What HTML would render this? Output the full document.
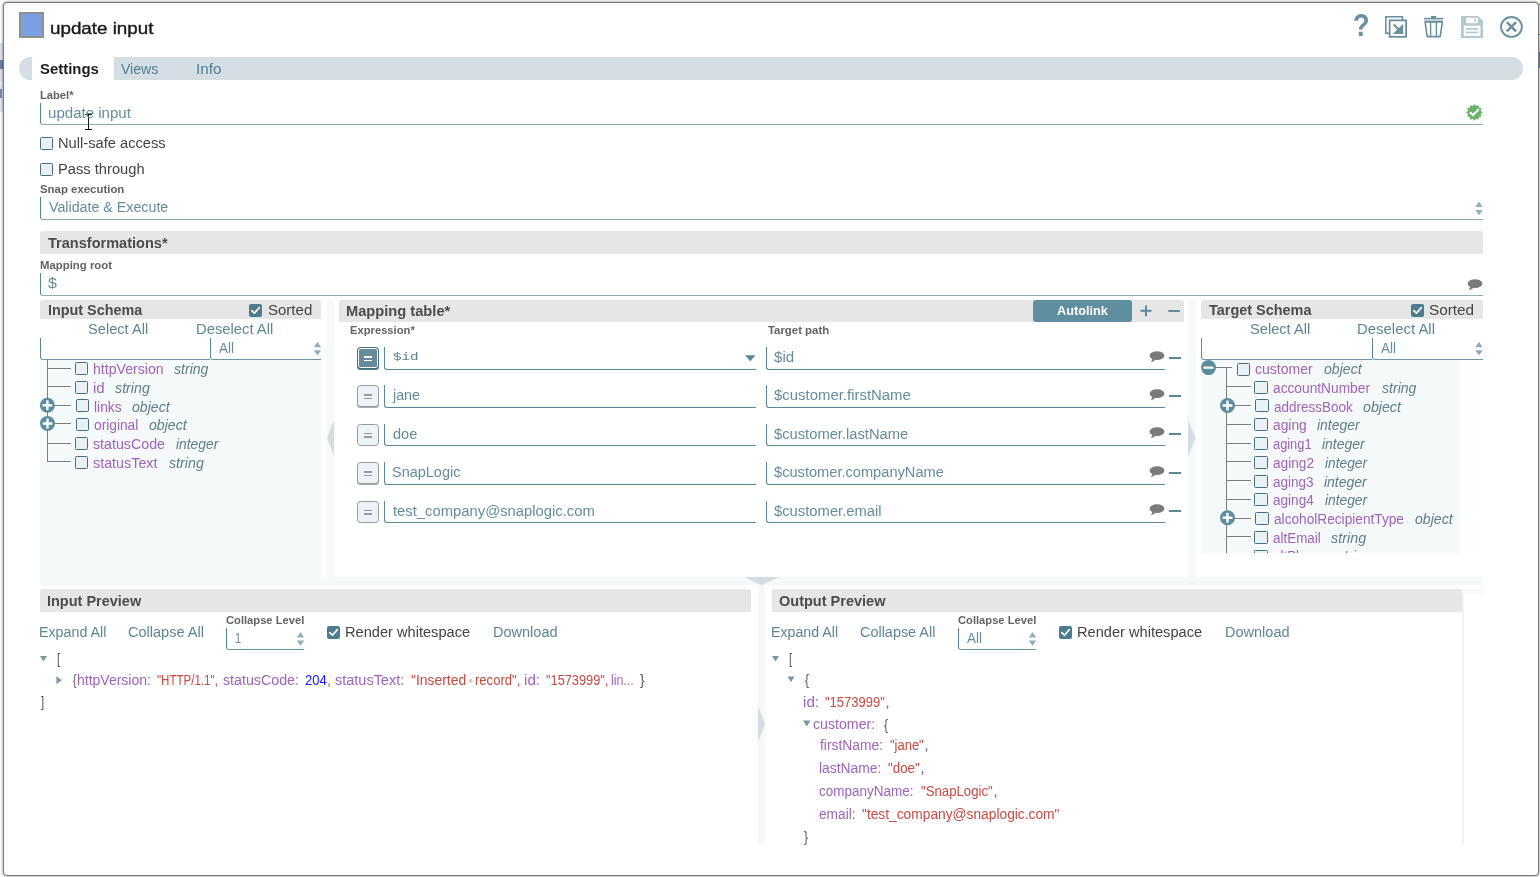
<!DOCTYPE html>
<html><head><meta charset="utf-8"><title>update input</title>
<style>
html,body{margin:0;padding:0;background:#fff;}
#root{position:relative;width:1540px;height:877px;overflow:hidden;background:#fff;font-family:"Liberation Sans",sans-serif;}
#root div,#root svg,#root span{position:absolute;box-sizing:border-box;}
.t{white-space:pre;line-height:normal;transform-origin:0 0;}

.dlg{left:3px;top:2px;width:1536px;height:874px;border:1px solid #7a7a7a;border-radius:4px;box-shadow:0 0 3px rgba(0,0,0,.55);background:#fff;}
.hdr{background:#e6e6e6;border-radius:3px 3px 0 0;}
.inp{border-left:1px solid #5a8798;border-bottom:1px solid #6e97a6;border-radius:0 0 0 3px;background:#fff;}
.inpl{border-left:1px solid #5a8798;border-bottom:1px solid #8dabb7;border-radius:0 0 0 3px;background:#fff;}
.inpd{border-left:1px solid #5a8798;border-bottom:1px solid #5a8798;border-radius:0 0 0 3px;background:#fff;}
.cb{width:13px;height:13px;border:1px solid #486e7d;background:#e9f1f4;border-radius:1.5px;}
.cbon{width:13px;height:13px;background:#4d7c8e;border-radius:2px;}
.pan{background:#f5f9fa;}
.ln{background:#7d7d7d;}
.eq{width:22px;height:22px;border:1px solid #9a9a9a;background:#ecf3f6;border-radius:3.5px;}
.eq i,.eqon i{position:absolute;left:6px;width:8px;height:1.5px;background:#999;}
.eqon{width:22px;height:22px;border:1px solid #46707f;background:#668b9b;border-radius:3.5px;box-shadow:0 0 0 1px #fff inset,0 1px 0 #55798a;}
.eqon i{background:#fff;}
.mn{height:2px;background:#5a8798;}

</style></head><body>
<div id="root">
<div style="left:0;top:43px;width:4px;height:38px;background:#dde2ec"></div>
<div style="left:0;top:81px;width:4px;height:4px;background:#eceff4"></div>
<div style="left:0;top:85px;width:4px;height:27px;background:#e1e5ee"></div>
<div style="left:0;top:60px;width:3px;height:9px;background:#6f7fae"></div>
<div style="left:0;top:89px;width:2px;height:9px;background:#7d8cb8"></div>
<div style="left:1539px;top:4px;width:1px;height:1px;background:#4a66a0"></div>
<div style="left:1539px;top:34px;width:1px;height:1px;background:#4a66a0"></div>
<div style="left:1539px;top:40px;width:1px;height:12px;background:#e8ebf2"></div>
<div style="left:1539px;top:52px;width:1px;height:16px;background:#6d88bb"></div>
<div class="dlg"></div>
<div style="left:19px;top:12px;width:25px;height:26px;border:2px solid #8f8f8f;background:#7b9fe3"></div>
<svg style="left:1385px;top:16px" width="23" height="23" viewBox="0 0 23 23">
<rect x="0.8" y="0.75" width="16.6" height="16.4" fill="#fff" stroke="#6a909f" stroke-width="1.6"/>
<rect x="4.65" y="4.35" width="16.45" height="16.45" fill="#fff" stroke="#6a909f" stroke-width="1.8"/>
<path d="M18.2 7.7 L18.2 17.95 L7.9 17.95 Z" fill="#6a909f"/>
<path d="M8.7 8.6 L14 13.9" stroke="#6a909f" stroke-width="2.1" fill="none"/>
</svg>
<svg style="left:1423px;top:15px" width="22" height="24" viewBox="0 0 22 24">
<rect x="8.06" y="0.95" width="4.9" height="2.1" fill="#6a909f"/>
<rect x="1.05" y="2.8" width="19.4" height="1.4" fill="#6a909f"/>
<rect x="1.3" y="4.2" width="18.9" height="2.1" fill="#b9cbd2"/>
<path d="M2.1 6.9 L19.4 6.9 L17.2 21.6 L4.2 21.6 Z" fill="none" stroke="#6a909f" stroke-width="1.6" stroke-linejoin="round"/>
<path d="M7.6 7 L7.6 21.6 M13.4 7 L13.4 21.6" fill="none" stroke="#6a909f" stroke-width="1.4"/>
</svg>
<svg style="left:1461px;top:16px" width="23" height="23" viewBox="0 0 23 23">
<path d="M0 0 L17 0 L22 5 L22 22 L0 22 Z" fill="#b5c8d0"/>
<rect x="5.2" y="1.8" width="11.6" height="5.4" fill="#fff"/>
<rect x="13.3" y="2.8" width="1.7" height="3.2" fill="#b5c8d0"/>
<rect x="2.8" y="9.7" width="16.6" height="10.2" fill="#fff"/>
<rect x="4.6" y="12" width="12.6" height="1.7" fill="#b5c8d0"/>
<rect x="4.6" y="15.6" width="12.6" height="1.6" fill="#b5c8d0"/>
</svg>
<svg style="left:1499px;top:14px" width="26" height="26" viewBox="0 0 26 26">
<ellipse cx="12.45" cy="12.95" rx="10.4" ry="9.9" fill="none" stroke="#6a909f" stroke-width="1.9"/>
<path d="M7.85 8.2 L17.05 17.4 M17.05 8.2 L7.85 17.4" stroke="#6a909f" stroke-width="2.5" fill="none"/>
</svg>
<div style="left:19px;top:57px;width:1504px;height:23px;border-radius:11.5px;background:#d5dee2"></div>
<div style="left:32px;top:57px;width:82px;height:23px;background:#fff"></div>
<div class="inpl" style="left:40px;top:103px;width:1443px;height:22px"></div>
<svg style="left:1466.1px;top:103.6px" width="17" height="17" viewBox="0 0 17 17">
<polygon points="8.40,0.00 10.08,2.12 12.60,1.13 13.00,3.80 15.67,4.20 14.68,6.72 16.80,8.40 14.68,10.08 15.67,12.60 13.00,13.00 12.60,15.67 10.08,14.68 8.40,16.80 6.72,14.68 4.20,15.67 3.80,13.00 1.13,12.60 2.12,10.08 0.00,8.40 2.12,6.72 1.13,4.20 3.80,3.80 4.20,1.13 6.72,2.12" fill="#6ab36a"/>
<path d="M4 8.2 L6.9 11 L12.9 5.2" fill="none" stroke="#fff" stroke-width="2.2"/></svg>
<div style="left:88px;top:114.5px;width:1px;height:15px;background:#111"></div>
<div style="left:85px;top:114px;width:7px;height:1px;background:#111"></div>
<div style="left:85px;top:129px;width:7px;height:1px;background:#111"></div>
<div class="cb" style="left:40px;top:137px"></div>
<div class="cb" style="left:40px;top:163px"></div>
<div class="inpl" style="left:40px;top:197px;width:1443px;height:23px"></div>
<svg style="left:0;top:0" width="1540" height="877"><path d="M1475.3 206.9 L1479 201.5 L1482.7 206.9 Z M1475.3 209.9 L1479 215.3 L1482.7 209.9 Z" fill="#92adb8"/></svg>
<div style="left:40px;top:231px;width:1443px;height:22.5px;background:#e6e6e6;border-radius:3px 3px 0 0"></div>
<div class="inpl" style="left:40px;top:273px;width:1443px;height:22.5px"></div>
<svg style="left:1466.5px;top:279px" width="16" height="12" viewBox="0 0 16 12"><ellipse cx="8" cy="4.6" rx="7.4" ry="4.4" fill="#7a7a7a"/><path d="M3.2 7.2 C3.4 9 2.6 10.2 1.6 11 C3.8 10.8 5.6 9.8 6.6 8.4 Z" fill="#7a7a7a"/></svg>
<div class="hdr" style="left:40px;top:300px;width:281px;height:19px"></div>
<div class="pan" style="left:40px;top:359px;width:281px;height:218px"></div>
<div class="cbon" style="left:249px;top:304px"></div><svg style="left:249px;top:304px" width="13" height="13" viewBox="0 0 13 13"><path d="M2.8 6.6 L5.4 9.2 L10.3 3.6" fill="none" stroke="#fff" stroke-width="1.7" stroke-linecap="round" stroke-linejoin="round"/></svg>
<div class="inp" style="left:40px;top:338px;width:170px;height:21.5px"></div>
<div class="inp" style="left:210px;top:338px;width:111px;height:21.5px"></div>
<svg style="left:0;top:0" width="1540" height="877"><path d="M313.8 347.2 L317.5 341.8 L321.2 347.2 Z M313.8 350.2 L317.5 355.59999999999997 L321.2 350.2 Z" fill="#92adb8"/></svg>
<div class="ln" style="left:47px;top:359.5px;width:1px;height:102.5px"></div>
<div class="ln" style="left:47px;top:368px;width:24px;height:1px"></div>
<div class="ln" style="left:47px;top:386px;width:24px;height:1px"></div>
<div class="ln" style="left:47px;top:405px;width:24px;height:1px"></div>
<div class="ln" style="left:47px;top:423px;width:24px;height:1px"></div>
<div class="ln" style="left:47px;top:443px;width:24px;height:1px"></div>
<div class="ln" style="left:47px;top:461px;width:24px;height:1px"></div>
<div class="cb" style="left:75px;top:362px"></div>
<div class="cb" style="left:75px;top:381px"></div>
<div class="cb" style="left:76px;top:399px"></div>
<div class="cb" style="left:76px;top:418px"></div>
<div class="cb" style="left:75px;top:437px"></div>
<div class="cb" style="left:75px;top:456px"></div>
<svg style="left:0;top:0" width="1540" height="877"><circle cx="47.4" cy="405.2" r="7.5" fill="#5b8d9e"/><rect x="42.4" y="404.0" width="10" height="2.4" rx="0.6" fill="#fff"/><rect x="46.199999999999996" y="400.2" width="2.4" height="10" rx="0.6" fill="#fff"/></svg>
<svg style="left:0;top:0" width="1540" height="877"><circle cx="47.5" cy="423.5" r="7.5" fill="#5b8d9e"/><rect x="42.5" y="422.3" width="10" height="2.4" rx="0.6" fill="#fff"/><rect x="46.3" y="418.5" width="2.4" height="10" rx="0.6" fill="#fff"/></svg>
<div class="pan" style="left:327px;top:300px;width:7px;height:277px"></div>
<div class="pan" style="left:1188px;top:300px;width:7.5px;height:277px"></div>
<div class="pan" style="left:40px;top:577px;width:1443px;height:8px"></div>
<div class="hdr" style="left:339px;top:300px;width:845px;height:21.5px"></div>
<div style="left:1033px;top:300px;width:99px;height:21.5px;background:#5f8f9f;border-radius:3px"></div>
<svg style="left:0;top:0" width="1540" height="877">
<path d="M1146 305.5 L1146 316.3 M1140.5 310.8 L1151.5 310.8" stroke="#5a8798" stroke-width="1.9" fill="none"/>
<path d="M1168.3 311 L1179.8 311" stroke="#5a8798" stroke-width="1.9" fill="none"/>
</svg>
<div class="eqon" style="left:357px;top:347px"><i style="top:8px"></i><i style="top:11.5px"></i></div>
<div class="inpd" style="left:384px;top:347px;width:372px;height:22.5px"></div>
<div class="inpd" style="left:766px;top:347px;width:399px;height:22.5px"></div>
<svg style="left:1148.8px;top:350.7px" width="16" height="12" viewBox="0 0 16 12"><ellipse cx="8" cy="4.6" rx="7.4" ry="4.4" fill="#7a7a7a"/><path d="M3.2 7.2 C3.4 9 2.6 10.2 1.6 11 C3.8 10.8 5.6 9.8 6.6 8.4 Z" fill="#7a7a7a"/></svg>
<div class="mn" style="left:1168.5px;top:356.5px;width:12px"></div>
<div class="eq" style="left:357px;top:385px;box-shadow:0 1px 0 #aaa;"><i style="top:8px"></i><i style="top:11.5px"></i></div>
<div class="inpd" style="left:384px;top:385px;width:372px;height:22.5px"></div>
<div class="inpd" style="left:766px;top:385px;width:399px;height:22.5px"></div>
<svg style="left:1148.8px;top:388.7px" width="16" height="12" viewBox="0 0 16 12"><ellipse cx="8" cy="4.6" rx="7.4" ry="4.4" fill="#7a7a7a"/><path d="M3.2 7.2 C3.4 9 2.6 10.2 1.6 11 C3.8 10.8 5.6 9.8 6.6 8.4 Z" fill="#7a7a7a"/></svg>
<div class="mn" style="left:1168.5px;top:394.5px;width:12px"></div>
<div class="eq" style="left:357px;top:423.5px;"><i style="top:8px"></i><i style="top:11.5px"></i></div>
<div class="inpd" style="left:384px;top:423.5px;width:372px;height:22.5px"></div>
<div class="inpd" style="left:766px;top:423.5px;width:399px;height:22.5px"></div>
<svg style="left:1148.8px;top:427.2px" width="16" height="12" viewBox="0 0 16 12"><ellipse cx="8" cy="4.6" rx="7.4" ry="4.4" fill="#7a7a7a"/><path d="M3.2 7.2 C3.4 9 2.6 10.2 1.6 11 C3.8 10.8 5.6 9.8 6.6 8.4 Z" fill="#7a7a7a"/></svg>
<div class="mn" style="left:1168.5px;top:433.0px;width:12px"></div>
<div class="eq" style="left:357px;top:462px;box-shadow:0 1px 0 #aaa;"><i style="top:8px"></i><i style="top:11.5px"></i></div>
<div class="inpd" style="left:384px;top:462px;width:372px;height:22.5px"></div>
<div class="inpd" style="left:766px;top:462px;width:399px;height:22.5px"></div>
<svg style="left:1148.8px;top:465.7px" width="16" height="12" viewBox="0 0 16 12"><ellipse cx="8" cy="4.6" rx="7.4" ry="4.4" fill="#7a7a7a"/><path d="M3.2 7.2 C3.4 9 2.6 10.2 1.6 11 C3.8 10.8 5.6 9.8 6.6 8.4 Z" fill="#7a7a7a"/></svg>
<div class="mn" style="left:1168.5px;top:471.5px;width:12px"></div>
<div class="eq" style="left:357px;top:500.5px;"><i style="top:8px"></i><i style="top:11.5px"></i></div>
<div class="inpd" style="left:384px;top:500.5px;width:372px;height:22.5px"></div>
<div class="inpd" style="left:766px;top:500.5px;width:399px;height:22.5px"></div>
<svg style="left:1148.8px;top:504.2px" width="16" height="12" viewBox="0 0 16 12"><ellipse cx="8" cy="4.6" rx="7.4" ry="4.4" fill="#7a7a7a"/><path d="M3.2 7.2 C3.4 9 2.6 10.2 1.6 11 C3.8 10.8 5.6 9.8 6.6 8.4 Z" fill="#7a7a7a"/></svg>
<div class="mn" style="left:1168.5px;top:510.0px;width:12px"></div>
<div class="hdr" style="left:1201px;top:300px;width:282px;height:19px"></div>
<div class="pan" style="left:1201px;top:359px;width:258.5px;height:193.5px"></div>
<div class="cbon" style="left:1411px;top:304px"></div><svg style="left:1411px;top:304px" width="13" height="13" viewBox="0 0 13 13"><path d="M2.8 6.6 L5.4 9.2 L10.3 3.6" fill="none" stroke="#fff" stroke-width="1.7" stroke-linecap="round" stroke-linejoin="round"/></svg>
<div class="inp" style="left:1201px;top:338px;width:171px;height:21.5px"></div>
<div class="inp" style="left:1372px;top:338px;width:111px;height:21.5px"></div>
<svg style="left:0;top:0" width="1540" height="877"><path d="M1475.3 347.2 L1479 341.8 L1482.7 347.2 Z M1475.3 350.2 L1479 355.59999999999997 L1482.7 350.2 Z" fill="#92adb8"/></svg>
<div style="left:1201px;top:359px;width:258.5px;height:193.5px;overflow:hidden">
<div class="ln" style="left:25px;top:9px;width:1px;height:200px"></div>
<div class="ln" style="left:14px;top:8px;width:16.5px;height:1px"></div>
<div class="ln" style="left:25px;top:27px;width:24.5px;height:1px"></div>
<div class="ln" style="left:25px;top:46px;width:24.5px;height:1px"></div>
<div class="ln" style="left:25px;top:65px;width:24.5px;height:1px"></div>
<div class="ln" style="left:25px;top:84px;width:24.5px;height:1px"></div>
<div class="ln" style="left:25px;top:102px;width:24.5px;height:1px"></div>
<div class="ln" style="left:25px;top:121px;width:24.5px;height:1px"></div>
<div class="ln" style="left:25px;top:140px;width:24.5px;height:1px"></div>
<div class="ln" style="left:25px;top:159px;width:24.5px;height:1px"></div>
<div class="ln" style="left:25px;top:177px;width:24.5px;height:1px"></div>
<div class="ln" style="left:25px;top:196px;width:24.5px;height:1px"></div>
<div class="cb" style="left:36px;top:4px"></div>
<div class="cb" style="left:53px;top:22px;width:14px"></div>
<div class="cb" style="left:54px;top:40px;width:14px"></div>
<div class="cb" style="left:53px;top:59px;width:14px"></div>
<div class="cb" style="left:53px;top:78px;width:14px"></div>
<div class="cb" style="left:53px;top:97px;width:14px"></div>
<div class="cb" style="left:53px;top:116px;width:14px"></div>
<div class="cb" style="left:53px;top:134px;width:14px"></div>
<div class="cb" style="left:54px;top:153px;width:14px"></div>
<div class="cb" style="left:53px;top:172px;width:14px"></div>
<div class="cb" style="left:53px;top:191px;width:14px"></div>
</div>
<svg style="left:0;top:0" width="1540" height="877"><circle cx="1208.5" cy="367.6" r="7.5" fill="#5b8d9e"/><rect x="1203.5" y="366.40000000000003" width="10" height="2.4" rx="0.6" fill="#fff"/></svg>
<svg style="left:0;top:0" width="1540" height="877"><circle cx="1227.5" cy="405.5" r="7.5" fill="#5b8d9e"/><rect x="1222.5" y="404.3" width="10" height="2.4" rx="0.6" fill="#fff"/><rect x="1226.3" y="400.5" width="2.4" height="10" rx="0.6" fill="#fff"/></svg>
<svg style="left:0;top:0" width="1540" height="877"><circle cx="1227.5" cy="517.7" r="7.5" fill="#5b8d9e"/><rect x="1222.5" y="516.5" width="10" height="2.4" rx="0.6" fill="#fff"/><rect x="1226.3" y="512.7" width="2.4" height="10" rx="0.6" fill="#fff"/></svg>
<div class="hdr" style="left:40px;top:589px;width:711px;height:23px"></div>
<div class="hdr" style="left:772px;top:589px;width:690px;height:23px"></div>
<div class="pan" style="left:758px;top:585px;width:7px;height:259.5px"></div>
<div class="pan" style="left:1462px;top:589px;width:21px;height:4.5px"></div>
<div style="left:1462px;top:593.5px;width:2px;height:251px;background:#f3f3f3"></div>
<div class="inp" style="left:226px;top:628px;width:78px;height:21.5px"></div>
<svg style="left:0;top:0" width="1540" height="877"><path d="M296.8 637.4 L300.5 632 L304.2 637.4 Z M296.8 640.4 L300.5 645.8 L304.2 640.4 Z" fill="#92adb8"/></svg>
<div class="inp" style="left:958px;top:628px;width:78px;height:21.5px"></div>
<svg style="left:0;top:0" width="1540" height="877"><path d="M1028.8 637.4 L1032.5 632 L1036.2 637.4 Z M1028.8 640.4 L1032.5 645.8 L1036.2 640.4 Z" fill="#92adb8"/></svg>
<div class="cbon" style="left:327px;top:626px"></div><svg style="left:327px;top:626px" width="13" height="13" viewBox="0 0 13 13"><path d="M2.8 6.6 L5.4 9.2 L10.3 3.6" fill="none" stroke="#fff" stroke-width="1.7" stroke-linecap="round" stroke-linejoin="round"/></svg>
<div class="cbon" style="left:1059px;top:626px"></div><svg style="left:1059px;top:626px" width="13" height="13" viewBox="0 0 13 13"><path d="M2.8 6.6 L5.4 9.2 L10.3 3.6" fill="none" stroke="#fff" stroke-width="1.7" stroke-linecap="round" stroke-linejoin="round"/></svg>
<svg style="left:0;top:0" width="1540" height="877">
<path d="M40 656 L47 656 L43.5 661.5 Z" fill="#7c97a1"/>
<path d="M56.4 676.2 L61.8 680.2 L56.4 684.2 Z" fill="#7c97a1"/>
<path d="M772 656 L779 656 L775.5 661.5 Z" fill="#7c97a1"/>
<path d="M787.5 676.5 L794.5 676.5 L791 682.3 Z" fill="#7c97a1"/>
<path d="M803 720.5 L810.5 720.5 L806.75 726.5 Z" fill="#7c97a1"/>
<circle cx="470.7" cy="681" r="2" fill="#ecc3be"/>
</svg>
<svg style="left:0;top:0" width="1540" height="877">
<path d="M334 420 L327 438 L334 456 Z" fill="#d3dee2"/>
<path d="M1188 420 L1195.5 438 L1188 456 Z" fill="#d3dee2"/>
<path d="M743.5 577 L761.5 585 L779.5 577 Z" fill="#d3dee2"/>
<path d="M758 706 L765 724 L758 742 Z" fill="#d3dee2"/>
<path d="M745 355.3 L755.5 355.3 L750.25 361.3 Z" fill="#5a8798"/>
</svg>
<div id="txt" style="left:0;top:0;width:1540px;height:877px;will-change:transform">
<span class="t" style="left:50.28px;top:18.50px;font:normal normal 17px 'Liberation Sans', sans-serif;color:#1a1a1a;transform:scaleX(1.1052);-webkit-text-stroke:0.4px #1a1a1a;">update input</span>
<span class="t" style="left:1352.83px;top:8.00px;font:normal bold 31px 'Liberation Sans', sans-serif;color:#6a909f;transform:scaleX(0.8736);">?</span>
<span class="t" style="left:39.86px;top:60.50px;font:normal bold 14px 'Liberation Sans', sans-serif;color:#1c1c1c;transform:scaleX(1.0646);">Settings</span>
<span class="t" style="left:121.18px;top:60.50px;font:normal normal 14px 'Liberation Sans', sans-serif;color:#4f7f93;transform:scaleX(1.0029);">Views</span>
<span class="t" style="left:195.67px;top:60.50px;font:normal normal 14px 'Liberation Sans', sans-serif;color:#4f7f93;transform:scaleX(1.0889);">Info</span>
<span class="t" style="left:40.01px;top:89.00px;font:normal bold 11px 'Liberation Sans', sans-serif;color:#636363;transform:scaleX(1.0159);">Label*</span>
<span class="t" style="left:48.09px;top:105.00px;font:normal normal 14px 'Liberation Sans', sans-serif;color:#668c9c;transform:scaleX(1.0760);">update input</span>
<span class="t" style="left:57.66px;top:135.00px;font:normal normal 14px 'Liberation Sans', sans-serif;color:#444444;transform:scaleX(1.0484);">Null-safe access</span>
<span class="t" style="left:57.85px;top:161.00px;font:normal normal 14px 'Liberation Sans', sans-serif;color:#444444;transform:scaleX(1.0494);">Pass through</span>
<span class="t" style="left:40.17px;top:183.00px;font:normal bold 11px 'Liberation Sans', sans-serif;color:#636363;transform:scaleX(1.0373);">Snap execution</span>
<span class="t" style="left:48.67px;top:199.00px;font:normal normal 14px 'Liberation Sans', sans-serif;color:#668c9c;transform:scaleX(1.0172);">Validate &amp; Execute</span>
<span class="t" style="left:48.06px;top:235.00px;font:normal bold 14px 'Liberation Sans', sans-serif;color:#4c4c4c;transform:scaleX(1.0387);">Transformations*</span>
<span class="t" style="left:39.98px;top:259.00px;font:normal bold 11px 'Liberation Sans', sans-serif;color:#636363;transform:scaleX(1.0333);">Mapping root</span>
<span class="t" style="left:48.21px;top:274.50px;font:normal normal 14px 'Liberation Sans', sans-serif;color:#668c9c;transform:scaleX(1.1389);">$</span>
<span class="t" style="left:48.07px;top:302.00px;font:normal bold 14px 'Liberation Sans', sans-serif;color:#4c4c4c;transform:scaleX(1.0268);">Input Schema</span>
<span class="t" style="left:268.10px;top:302.00px;font:normal normal 14px 'Liberation Sans', sans-serif;color:#444444;transform:scaleX(1.0724);">Sorted</span>
<span class="t" style="left:87.83px;top:321.00px;font:normal normal 14px 'Liberation Sans', sans-serif;color:#5e8595;transform:scaleX(1.0452);">Select All</span>
<span class="t" style="left:195.85px;top:321.00px;font:normal normal 14px 'Liberation Sans', sans-serif;color:#5e8595;transform:scaleX(1.0562);">Deselect All</span>
<span class="t" style="left:219.23px;top:340.00px;font:normal normal 14px 'Liberation Sans', sans-serif;color:#668c9c;transform:scaleX(0.9586);">All</span>
<span class="t" style="left:93.12px;top:361.00px;font:normal normal 14px 'Liberation Sans', sans-serif;color:#a064b8;transform:scaleX(1.0074);">httpVersion</span>
<span class="t" style="left:173.69px;top:361.00px;font:italic normal 14px 'Liberation Sans', sans-serif;color:#5f7d88;transform:scaleX(1.0060);">string</span>
<span class="t" style="left:93.18px;top:380.00px;font:normal normal 14px 'Liberation Sans', sans-serif;color:#a064b8;transform:scaleX(1.0709);">id</span>
<span class="t" style="left:114.69px;top:380.00px;font:italic normal 14px 'Liberation Sans', sans-serif;color:#5f7d88;transform:scaleX(1.0183);">string</span>
<span class="t" style="left:94.30px;top:399.00px;font:normal normal 14px 'Liberation Sans', sans-serif;color:#a064b8;transform:scaleX(0.9870);">links</span>
<span class="t" style="left:132.28px;top:399.00px;font:italic normal 14px 'Liberation Sans', sans-serif;color:#5f7d88;transform:scaleX(1.0074);">object</span>
<span class="t" style="left:94.07px;top:417.00px;font:normal normal 14px 'Liberation Sans', sans-serif;color:#a064b8;transform:scaleX(0.9812);">original</span>
<span class="t" style="left:149.28px;top:417.00px;font:italic normal 14px 'Liberation Sans', sans-serif;color:#5f7d88;transform:scaleX(1.0074);">object</span>
<span class="t" style="left:93.48px;top:436.00px;font:normal normal 14px 'Liberation Sans', sans-serif;color:#a064b8;transform:scaleX(1.0171);">statusCode</span>
<span class="t" style="left:176.12px;top:436.00px;font:italic normal 14px 'Liberation Sans', sans-serif;color:#5f7d88;transform:scaleX(0.9872);">integer</span>
<span class="t" style="left:93.31px;top:455.00px;font:normal normal 14px 'Liberation Sans', sans-serif;color:#a064b8;transform:scaleX(1.0232);">statusText</span>
<span class="t" style="left:169.21px;top:455.00px;font:italic normal 14px 'Liberation Sans', sans-serif;color:#5f7d88;transform:scaleX(1.0170);">string</span>
<span class="t" style="left:346.20px;top:303.00px;font:normal bold 14px 'Liberation Sans', sans-serif;color:#4c4c4c;transform:scaleX(1.0471);">Mapping table*</span>
<span class="t" style="left:350.27px;top:324.00px;font:normal bold 11px 'Liberation Sans', sans-serif;color:#636363;transform:scaleX(1.0183);">Expression*</span>
<span class="t" style="left:767.75px;top:324.00px;font:normal bold 11px 'Liberation Sans', sans-serif;color:#636363;transform:scaleX(1.0350);">Target path</span>
<span class="t" style="left:1057.22px;top:303.00px;font:normal bold 13px 'Liberation Sans', sans-serif;color:#ffffff;transform:scaleX(0.9780);">Autolink</span>
<span class="t" style="left:392.68px;top:351.00px;font:normal normal 11px 'Liberation Mono', monospace;color:#5f7f8c;transform:scaleX(1.2964);">$id</span>
<span class="t" style="left:393.44px;top:386.50px;font:normal normal 14px 'Liberation Sans', sans-serif;color:#668c9c;transform:scaleX(1.0200);">jane</span>
<span class="t" style="left:393.11px;top:425.50px;font:normal normal 14px 'Liberation Sans', sans-serif;color:#668c9c;transform:scaleX(1.0419);">doe</span>
<span class="t" style="left:392.36px;top:464.00px;font:normal normal 14px 'Liberation Sans', sans-serif;color:#668c9c;transform:scaleX(1.0333);">SnapLogic</span>
<span class="t" style="left:392.69px;top:503.00px;font:normal normal 14px 'Liberation Sans', sans-serif;color:#668c9c;transform:scaleX(1.0572);">test_company@snaplogic.com</span>
<span class="t" style="left:774.26px;top:348.50px;font:normal normal 14px 'Liberation Sans', sans-serif;color:#668c9c;transform:scaleX(1.0805);">$id</span>
<span class="t" style="left:774.17px;top:387.00px;font:normal normal 14px 'Liberation Sans', sans-serif;color:#668c9c;transform:scaleX(1.0661);">$customer.firstName</span>
<span class="t" style="left:774.26px;top:426.00px;font:normal normal 14px 'Liberation Sans', sans-serif;color:#668c9c;transform:scaleX(1.0517);">$customer.lastName</span>
<span class="t" style="left:774.20px;top:464.00px;font:normal normal 14px 'Liberation Sans', sans-serif;color:#668c9c;transform:scaleX(1.0442);">$customer.companyName</span>
<span class="t" style="left:773.96px;top:503.00px;font:normal normal 14px 'Liberation Sans', sans-serif;color:#668c9c;transform:scaleX(1.0562);">$customer.email</span>
<span class="t" style="left:1209.46px;top:302.00px;font:normal bold 14px 'Liberation Sans', sans-serif;color:#4c4c4c;transform:scaleX(1.0314);">Target Schema</span>
<span class="t" style="left:1429.29px;top:302.00px;font:normal normal 14px 'Liberation Sans', sans-serif;color:#444444;transform:scaleX(1.0944);">Sorted</span>
<span class="t" style="left:1249.83px;top:321.00px;font:normal normal 14px 'Liberation Sans', sans-serif;color:#5e8595;transform:scaleX(1.0452);">Select All</span>
<span class="t" style="left:1357.12px;top:321.00px;font:normal normal 14px 'Liberation Sans', sans-serif;color:#5e8595;transform:scaleX(1.0663);">Deselect All</span>
<span class="t" style="left:1380.51px;top:340.00px;font:normal normal 14px 'Liberation Sans', sans-serif;color:#668c9c;transform:scaleX(0.9730);">All</span>
<span class="t" style="left:1255.31px;top:361.00px;font:normal normal 14px 'Liberation Sans', sans-serif;color:#a064b8;transform:scaleX(1.0011);">customer</span>
<span class="t" style="left:1324.28px;top:361.00px;font:italic normal 14px 'Liberation Sans', sans-serif;color:#5f7d88;transform:scaleX(1.0074);">object</span>
<span class="t" style="left:1273.19px;top:380.00px;font:normal normal 14px 'Liberation Sans', sans-serif;color:#a064b8;transform:scaleX(0.9811);">accountNumber</span>
<span class="t" style="left:1381.69px;top:380.00px;font:italic normal 14px 'Liberation Sans', sans-serif;color:#5f7d88;transform:scaleX(1.0060);">string</span>
<span class="t" style="left:1274.39px;top:399.00px;font:normal normal 14px 'Liberation Sans', sans-serif;color:#a064b8;transform:scaleX(0.9630);">addressBook</span>
<span class="t" style="left:1363.29px;top:399.00px;font:italic normal 14px 'Liberation Sans', sans-serif;color:#5f7d88;transform:scaleX(1.0140);">object</span>
<span class="t" style="left:1273.36px;top:417.00px;font:normal normal 14px 'Liberation Sans', sans-serif;color:#a064b8;transform:scaleX(0.9869);">aging</span>
<span class="t" style="left:1317.00px;top:417.00px;font:italic normal 14px 'Liberation Sans', sans-serif;color:#5f7d88;transform:scaleX(0.9976);">integer</span>
<span class="t" style="left:1273.24px;top:436.00px;font:normal normal 14px 'Liberation Sans', sans-serif;color:#a064b8;transform:scaleX(0.9162);">aging1</span>
<span class="t" style="left:1322.00px;top:436.00px;font:italic normal 14px 'Liberation Sans', sans-serif;color:#5f7d88;transform:scaleX(0.9976);">integer</span>
<span class="t" style="left:1273.11px;top:455.00px;font:normal normal 14px 'Liberation Sans', sans-serif;color:#a064b8;transform:scaleX(0.9762);">aging2</span>
<span class="t" style="left:1324.65px;top:455.00px;font:italic normal 14px 'Liberation Sans', sans-serif;color:#5f7d88;transform:scaleX(0.9840);">integer</span>
<span class="t" style="left:1273.14px;top:473.50px;font:normal normal 14px 'Liberation Sans', sans-serif;color:#a064b8;transform:scaleX(0.9635);">aging3</span>
<span class="t" style="left:1324.00px;top:473.50px;font:italic normal 14px 'Liberation Sans', sans-serif;color:#5f7d88;transform:scaleX(0.9976);">integer</span>
<span class="t" style="left:1273.39px;top:492.00px;font:normal normal 14px 'Liberation Sans', sans-serif;color:#a064b8;transform:scaleX(0.9697);">aging4</span>
<span class="t" style="left:1324.65px;top:492.00px;font:italic normal 14px 'Liberation Sans', sans-serif;color:#5f7d88;transform:scaleX(0.9840);">integer</span>
<span class="t" style="left:1274.37px;top:511.00px;font:normal normal 14px 'Liberation Sans', sans-serif;color:#a064b8;transform:scaleX(0.9762);">alcoholRecipientType</span>
<span class="t" style="left:1415.28px;top:511.00px;font:italic normal 14px 'Liberation Sans', sans-serif;color:#5f7d88;transform:scaleX(1.0074);">object</span>
<span class="t" style="left:1273.40px;top:529.50px;font:normal normal 14px 'Liberation Sans', sans-serif;color:#a064b8;transform:scaleX(0.9587);">altEmail</span>
<span class="t" style="left:1331.05px;top:529.50px;font:italic normal 14px 'Liberation Sans', sans-serif;color:#5f7d88;transform:scaleX(1.0288);">string</span>
<span class="t" style="left:1273.22px;top:548.00px;font:normal normal 14px 'Liberation Sans', sans-serif;color:#a064b8;transform:scaleX(0.9573);">altPhone</span>
<span class="t" style="left:1337.21px;top:548.00px;font:italic normal 14px 'Liberation Sans', sans-serif;color:#5f7d88;transform:scaleX(1.0170);">string</span>
<span class="t" style="left:47.18px;top:593.00px;font:normal bold 14px 'Liberation Sans', sans-serif;color:#4c4c4c;transform:scaleX(1.0343);">Input Preview</span>
<span class="t" style="left:39.30px;top:624.00px;font:normal normal 14px 'Liberation Sans', sans-serif;color:#5e8595;transform:scaleX(1.0171);">Expand All</span>
<span class="t" style="left:127.99px;top:624.00px;font:normal normal 14px 'Liberation Sans', sans-serif;color:#5e8595;transform:scaleX(1.0372);">Collapse All</span>
<span class="t" style="left:226.25px;top:614.00px;font:normal bold 11px 'Liberation Sans', sans-serif;color:#636363;transform:scaleX(1.0158);">Collapse Level</span>
<span class="t" style="left:234.54px;top:629.50px;font:normal normal 14px 'Liberation Sans', sans-serif;color:#668c9c;transform:scaleX(0.7857);">1</span>
<span class="t" style="left:345.08px;top:624.00px;font:normal normal 14px 'Liberation Sans', sans-serif;color:#444444;transform:scaleX(1.0440);">Render whitespace</span>
<span class="t" style="left:492.86px;top:624.00px;font:normal normal 14px 'Liberation Sans', sans-serif;color:#5e8595;transform:scaleX(1.0368);">Download</span>
<span class="t" style="left:56.75px;top:650.00px;font:normal normal 15px 'Liberation Sans', sans-serif;color:#555555;transform:scaleX(0.7500);">[</span>
<span class="t" style="left:73.20px;top:671.00px;font:normal normal 15px 'Liberation Sans', sans-serif;color:#555555;transform:scaleX(0.7000);">{</span>
<span class="t" style="left:77.09px;top:672.00px;font:normal normal 14px 'Liberation Sans', sans-serif;color:#a064b8;transform:scaleX(0.9997);">httpVersion:</span>
<span class="t" style="left:157.49px;top:672.00px;font:normal normal 14px 'Liberation Sans', sans-serif;color:#c44c42;transform:scaleX(0.8251);">&quot;HTTP/1.1&quot;,</span>
<span class="t" style="left:223.11px;top:672.00px;font:normal normal 14px 'Liberation Sans', sans-serif;color:#a064b8;transform:scaleX(1.0170);">statusCode:</span>
<span class="t" style="left:305.33px;top:672.00px;font:normal normal 14px 'Liberation Sans', sans-serif;color:#1a1aff;transform:scaleX(0.9286);">204</span>
<span class="t" style="left:327.00px;top:672.00px;font:normal normal 14px 'Liberation Sans', sans-serif;color:#777777;transform:scaleX(1.0000);">,</span>
<span class="t" style="left:335.28px;top:672.00px;font:normal normal 14px 'Liberation Sans', sans-serif;color:#a064b8;transform:scaleX(1.0341);">statusText:</span>
<span class="t" style="left:411.39px;top:672.00px;font:normal normal 14px 'Liberation Sans', sans-serif;color:#c44c42;transform:scaleX(0.9938);">&quot;Inserted</span>
<span class="t" style="left:475.12px;top:672.00px;font:normal normal 14px 'Liberation Sans', sans-serif;color:#c44c42;transform:scaleX(0.9323);">record&quot;,</span>
<span class="t" style="left:523.95px;top:672.00px;font:normal normal 14px 'Liberation Sans', sans-serif;color:#a064b8;transform:scaleX(1.0885);">id:</span>
<span class="t" style="left:546.21px;top:672.00px;font:normal normal 14px 'Liberation Sans', sans-serif;color:#c44c42;transform:scaleX(0.9119);">&quot;1573999&quot;,</span>
<span class="t" style="left:611.48px;top:672.00px;font:normal normal 14px 'Liberation Sans', sans-serif;color:#a064b8;transform:scaleX(0.8810);">lin...</span>
<span class="t" style="left:640.00px;top:671.00px;font:normal normal 15px 'Liberation Sans', sans-serif;color:#555555;transform:scaleX(0.9000);">}</span>
<span class="t" style="left:41.00px;top:693.00px;font:normal normal 15px 'Liberation Sans', sans-serif;color:#555555;transform:scaleX(0.7500);">]</span>
<span class="t" style="left:779.12px;top:593.00px;font:normal bold 14px 'Liberation Sans', sans-serif;color:#4c4c4c;transform:scaleX(1.0368);">Output Preview</span>
<span class="t" style="left:770.56px;top:624.00px;font:normal normal 14px 'Liberation Sans', sans-serif;color:#5e8595;transform:scaleX(1.0136);">Expand All</span>
<span class="t" style="left:860.00px;top:624.00px;font:normal normal 14px 'Liberation Sans', sans-serif;color:#5e8595;transform:scaleX(1.0305);">Collapse All</span>
<span class="t" style="left:958.25px;top:614.00px;font:normal bold 11px 'Liberation Sans', sans-serif;color:#636363;transform:scaleX(1.0158);">Collapse Level</span>
<span class="t" style="left:967.23px;top:629.50px;font:normal normal 14px 'Liberation Sans', sans-serif;color:#668c9c;transform:scaleX(0.9586);">All</span>
<span class="t" style="left:1077.08px;top:624.00px;font:normal normal 14px 'Liberation Sans', sans-serif;color:#444444;transform:scaleX(1.0440);">Render whitespace</span>
<span class="t" style="left:1224.86px;top:624.00px;font:normal normal 14px 'Liberation Sans', sans-serif;color:#5e8595;transform:scaleX(1.0368);">Download</span>
<span class="t" style="left:788.75px;top:650.00px;font:normal normal 15px 'Liberation Sans', sans-serif;color:#555555;transform:scaleX(0.7500);">[</span>
<span class="t" style="left:805.00px;top:670.60px;font:normal normal 15px 'Liberation Sans', sans-serif;color:#555555;transform:scaleX(0.8000);">{</span>
<span class="t" style="left:802.95px;top:693.50px;font:normal normal 14px 'Liberation Sans', sans-serif;color:#a064b8;transform:scaleX(1.0885);">id:</span>
<span class="t" style="left:825.30px;top:693.50px;font:normal normal 14px 'Liberation Sans', sans-serif;color:#c44c42;transform:scaleX(0.9282);">&quot;1573999&quot;</span>
<span class="t" style="left:885.25px;top:693.50px;font:normal normal 14px 'Liberation Sans', sans-serif;color:#777777;transform:scaleX(1.2500);">,</span>
<span class="t" style="left:813.16px;top:716.00px;font:normal normal 14px 'Liberation Sans', sans-serif;color:#a064b8;transform:scaleX(1.0113);">customer:</span>
<span class="t" style="left:883.50px;top:716.00px;font:normal normal 15px 'Liberation Sans', sans-serif;color:#555555;transform:scaleX(0.8000);">{</span>
<span class="t" style="left:819.71px;top:737.00px;font:normal normal 14px 'Liberation Sans', sans-serif;color:#a064b8;transform:scaleX(0.9869);">firstName:</span>
<span class="t" style="left:890.20px;top:737.00px;font:normal normal 14px 'Liberation Sans', sans-serif;color:#c44c42;transform:scaleX(0.9257);">&quot;jane&quot;</span>
<span class="t" style="left:923.75px;top:737.00px;font:normal normal 14px 'Liberation Sans', sans-serif;color:#777777;transform:scaleX(1.2500);">,</span>
<span class="t" style="left:819.21px;top:760.00px;font:normal normal 14px 'Liberation Sans', sans-serif;color:#a064b8;transform:scaleX(0.9899);">lastName:</span>
<span class="t" style="left:888.19px;top:760.00px;font:normal normal 14px 'Liberation Sans', sans-serif;color:#c44c42;transform:scaleX(0.9534);">&quot;doe&quot;</span>
<span class="t" style="left:919.75px;top:760.00px;font:normal normal 14px 'Liberation Sans', sans-serif;color:#777777;transform:scaleX(1.2500);">,</span>
<span class="t" style="left:819.20px;top:783.00px;font:normal normal 14px 'Liberation Sans', sans-serif;color:#a064b8;transform:scaleX(0.9634);">companyName:</span>
<span class="t" style="left:920.85px;top:783.00px;font:normal normal 14px 'Liberation Sans', sans-serif;color:#c44c42;transform:scaleX(0.9432);">&quot;SnapLogic&quot;</span>
<span class="t" style="left:992.75px;top:783.00px;font:normal normal 14px 'Liberation Sans', sans-serif;color:#777777;transform:scaleX(1.2500);">,</span>
<span class="t" style="left:819.06px;top:806.00px;font:normal normal 14px 'Liberation Sans', sans-serif;color:#a064b8;transform:scaleX(0.9789);">email:</span>
<span class="t" style="left:862.15px;top:806.00px;font:normal normal 14px 'Liberation Sans', sans-serif;color:#c44c42;transform:scaleX(0.9833);">&quot;test_company@snaplogic.com&quot;</span>
<span class="t" style="left:803.50px;top:827.50px;font:normal normal 15px 'Liberation Sans', sans-serif;color:#555555;transform:scaleX(0.8000);">}</span>
</div>
<div style="left:1201px;top:552.5px;width:282px;height:24.5px;background:#fff"></div>
<div style="left:766px;top:844.5px;width:700px;height:29px;background:#fff"></div>
</div>
</body></html>
